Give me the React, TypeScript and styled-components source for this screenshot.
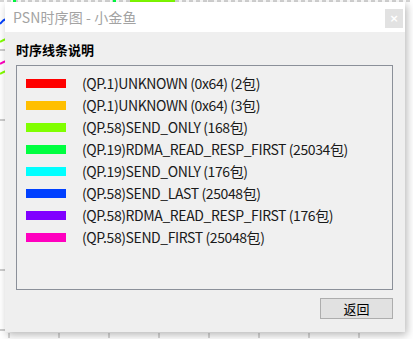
import styled, { createGlobalStyle } from "styled-components";

const GlobalStyle = createGlobalStyle`
  html, body {
    margin: 0;
    padding: 0;
    background: #ffffff;
  }
  body {
    font-family: "Noto Sans CJK SC", "Noto Sans", sans-serif;
  }
`;

const legend = [
  { color: "#ff0000", label: "(QP.1)UNKNOWN (0x64) (2包)" },
  { color: "#ffbf00", label: "(QP.1)UNKNOWN (0x64) (3包)" },
  { color: "#80ff00", label: "(QP.58)SEND_ONLY (168包)" },
  { color: "#00ff40", label: "(QP.19)RDMA_READ_RESP_FIRST (25034包)" },
  { color: "#00ffff", label: "(QP.19)SEND_ONLY (176包)" },
  { color: "#0040ff", label: "(QP.58)SEND_LAST (25048包)" },
  { color: "#8000ff", label: "(QP.58)RDMA_READ_RESP_FIRST (176包)" },
  { color: "#ff00bf", label: "(QP.58)SEND_FIRST (25048包)" },
];

const Page = styled.div`
  position: relative;
  width: 413px;
  height: 339px;
  overflow: hidden;
  background: #ffffff;
`;

const Chart = styled.svg`
  position: absolute;
  inset: 0;
`;

const Dialog = styled.div`
  position: absolute;
  left: 5px;
  top: 2px;
  width: 400px;
  height: 330px;
  display: flex;
  flex-direction: column;
  background: #efefef;
  box-shadow: 2px 3px 8px rgba(0, 0, 0, 0.28);
`;

const TitleBar = styled.div`
  height: 30px;
  flex-shrink: 0;
  display: flex;
  align-items: center;
  justify-content: space-between;
  padding: 0 2px 0 8px;
  background: #ffffff;
`;

const Title = styled.span`
  font-size: 14px;
  color: #a3a3a3;
  letter-spacing: 0.1px;
`;

const CloseButton = styled.div`
  width: 18px;
  height: 19px;
  display: flex;
  align-items: center;
  justify-content: center;
  background: #e2e2e2;
  color: #ffffff;
  font-family: "DejaVu Sans", sans-serif;
  font-size: 11px;
  font-weight: bold;
  margin-top: 3px;
`;

const Body = styled.div`
  flex: 1;
  display: flex;
  flex-direction: column;
  padding: 9px 12px 0 11px;
`;

const Heading = styled.div`
  font-size: 13px;
  font-weight: bold;
  color: #000000;
  line-height: 18px;
  height: 18px;
  margin-bottom: 6px;
`;

const LegendBox = styled.div`
  height: 225px;
  box-sizing: border-box;
  border: 1px solid #8b9099;
  background: #f0f0f0;
  padding: 6px 0 0 9px;
  display: flex;
  flex-direction: column;
`;

const Row = styled.div`
  height: 22px;
  display: flex;
  align-items: center;
`;

const Swatch = styled.span<{ $color: string }>`
  width: 40px;
  height: 9px;
  background: ${(p) => p.$color};
  margin-right: 16px;
  flex-shrink: 0;
`;

const Label = styled.span`
  font-size: 14px;
  letter-spacing: -0.4px;
  color: #1a1a1a;
  white-space: nowrap;
`;

const Footer = styled.div`
  display: flex;
  justify-content: flex-end;
  padding-top: 8px;
`;

const Button = styled.div`
  width: 71px;
  height: 19px;
  border: 1px solid #adadad;
  background: #e1e1e1;
  display: flex;
  align-items: center;
  justify-content: center;
  font-size: 13px;
  color: #000000;
`;

const gridX = [9, 59, 109, 159, 209, 259, 309, 359];

const App = () => {
  return (
    <Page>
      <GlobalStyle />
      <Chart width={413} height={339}>
        <line x1={0} y1={1} x2={413} y2={1} stroke="#d6d6d6" strokeWidth={2} strokeDasharray="4 3" />
        {gridX.map((x) => (
          <line key={x} x1={x} y1={0} x2={x} y2={339} stroke="#d6d6d6" strokeWidth={2} strokeDasharray="5 4" />
        ))}
        <line x1={0} y1={50} x2={5} y2={50} stroke="#cccccc" strokeWidth={2} />
        <line x1={0} y1={120} x2={5} y2={120} stroke="#cccccc" strokeWidth={2} />
        <line x1={0} y1={270} x2={5} y2={270} stroke="#cccccc" strokeWidth={2} />
        <line x1={0} y1={330} x2={5} y2={330} stroke="#cccccc" strokeWidth={2} />
        <path d="M0 24 Q3 20 6 19" stroke="#0040ff" strokeWidth={2} fill="none" />
        <path d="M0 42 Q3 40 6 39" stroke="#80ff00" strokeWidth={2} fill="none" />
        <path d="M0 64 Q3 62 6 61" stroke="#ff00bf" strokeWidth={2} fill="none" />
        <path d="M0 74 Q3 72 6 71" stroke="#80ff00" strokeWidth={2} fill="none" />
        <line x1={13} y1={1} x2={16} y2={1} stroke="#00ff40" strokeWidth={2} />
        <line x1={113} y1={1} x2={116} y2={1} stroke="#00ff40" strokeWidth={2} />
        <line x1={130} y1={1} x2={175} y2={1} stroke="#80ff00" strokeWidth={2} />
      </Chart>
      <Dialog>
        <TitleBar>
          <Title>PSN时序图 - 小金鱼</Title>
          <CloseButton>×</CloseButton>
        </TitleBar>
        <Body>
          <Heading>时序线条说明</Heading>
          <LegendBox>
            {legend.map((item) => (
              <Row key={item.label}>
                <Swatch $color={item.color} />
                <Label>{item.label}</Label>
              </Row>
            ))}
          </LegendBox>
          <Footer>
            <Button>返回</Button>
          </Footer>
        </Body>
      </Dialog>
    </Page>
  );
};

export default App;
